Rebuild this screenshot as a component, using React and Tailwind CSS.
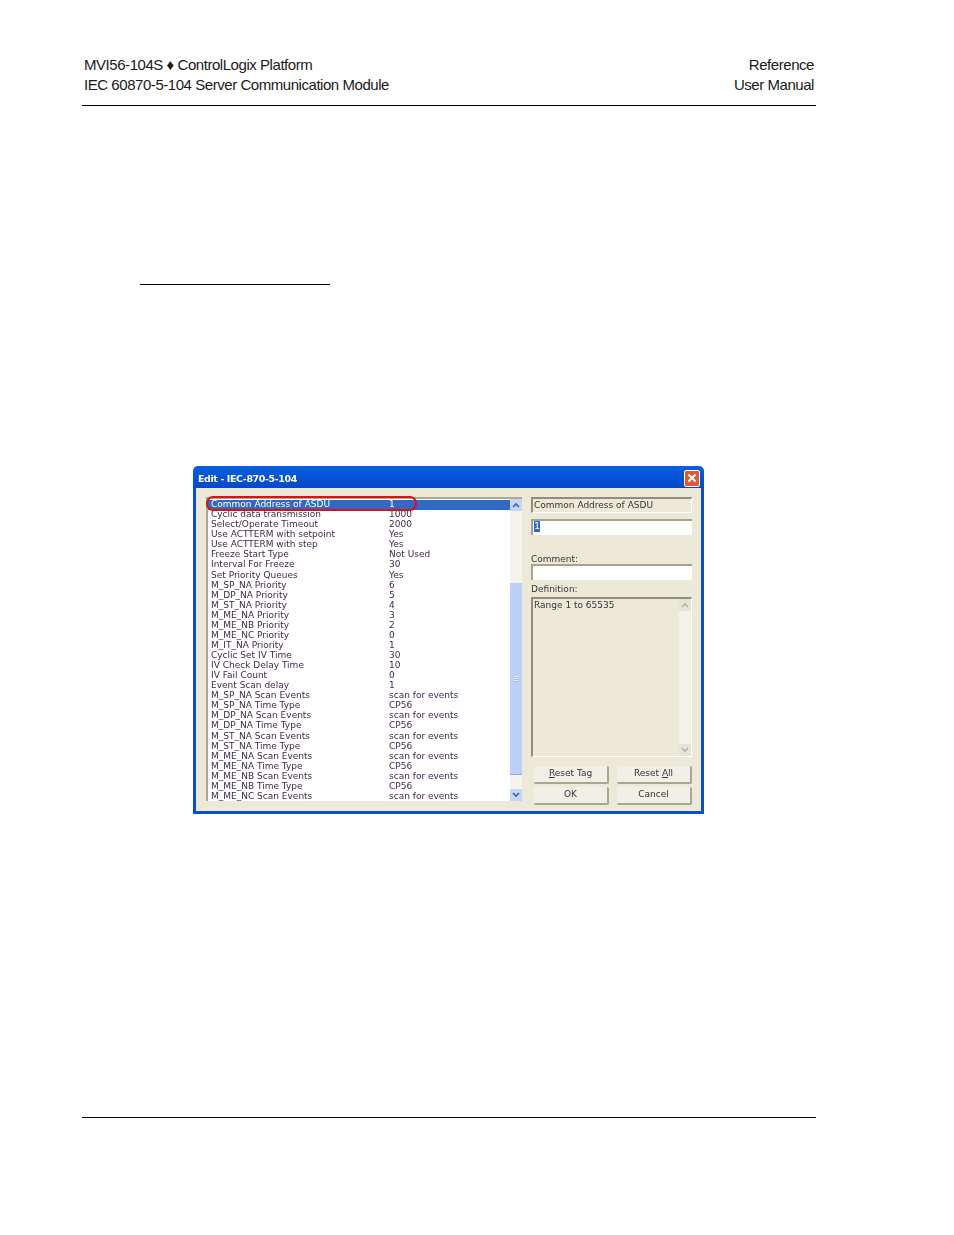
import React from "react";

const rows = [
  ["Common Address of ASDU", "1"],
  ["Cyclic data transmission", "1000"],
  ["Select/Operate Timeout", "2000"],
  ["Use ACTTERM with setpoint", "Yes"],
  ["Use ACTTERM with step", "Yes"],
  ["Freeze Start Type", "Not Used"],
  ["Interval For Freeze", "30"],
  ["Set Priority Queues", "Yes"],
  ["M_SP_NA Priority", "6"],
  ["M_DP_NA Priority", "5"],
  ["M_ST_NA Priority", "4"],
  ["M_ME_NA Priority", "3"],
  ["M_ME_NB Priority", "2"],
  ["M_ME_NC Priority", "0"],
  ["M_IT_NA Priority", "1"],
  ["Cyclic Set IV Time", "30"],
  ["IV Check Delay Time", "10"],
  ["IV Fail Count", "0"],
  ["Event Scan delay", "1"],
  ["M_SP_NA Scan Events", "scan for events"],
  ["M_SP_NA Time Type", "CP56"],
  ["M_DP_NA Scan Events", "scan for events"],
  ["M_DP_NA Time Type", "CP56"],
  ["M_ST_NA Scan Events", "scan for events"],
  ["M_ST_NA Time Type", "CP56"],
  ["M_ME_NA Scan Events", "scan for events"],
  ["M_ME_NA Time Type", "CP56"],
  ["M_ME_NB Scan Events", "scan for events"],
  ["M_ME_NB Time Type", "CP56"],
  ["M_ME_NC Scan Events", "scan for events"],
];

const Chevron = ({ up, color = "#3f5fa8" }) => (
  <svg width="8" height="6" viewBox="0 0 8 6" fill="none">
    <path d={up ? "M1 5 L4 2 L7 5" : "M1 1 L4 4 L7 1"} stroke={color} strokeWidth="1.6" />
  </svg>
);

const Btn = ({ children }) => (
  <div className="h-[18px] w-[75px] flex items-center justify-center rounded-[2px] bg-[#f1efe6] border-b-2 border-r-2 border-[#a9a692] text-[9px] text-[#3a3338]">
    {children}
  </div>
);

export default function App() {
  return (
    <div className="relative h-[1235px] w-[954px] bg-white font-['Liberation_Sans',sans-serif] text-[#1a1a1a]">
      <header className="ml-[82px] w-[734px] h-[106px] pt-[55px] border-b border-black">
        <div className="flex justify-between pl-[2px] pr-[2px] text-[15px] leading-[20px] tracking-[-0.45px]">
          <div>
            <div>MVI56-104S ♦ ControlLogix Platform</div>
            <div>IEC 60870-5-104 Server Communication Module</div>
          </div>
          <div className="text-right">
            <div>Reference</div>
            <div>User Manual</div>
          </div>
        </div>
      </header>

      <div className="ml-[140px] mt-[178px] w-[190px] h-px bg-black" />

      <div className="ml-[193px] mt-[181px] w-[511px] h-[348px] font-['DejaVu_Sans',sans-serif] blur-[0.25px]">
        <div className="h-[22px] flex items-center justify-between pl-[5px] pr-[4px] rounded-t-[5px] bg-gradient-to-b from-[#0a5fe0] via-[#0553d8] to-[#0648c8]">
          <span className="mt-[5px] text-white text-[9.5px] font-bold tracking-[-0.4px]">Edit - IEC-870-5-104</span>
          <div className="mt-[2px] w-[16px] h-[17px] flex items-center justify-center rounded-[2px] bg-[#dc5a3a] border border-white">
            <svg width="10" height="10" viewBox="0 0 10 10" fill="none">
              <path d="M1.5 1.5 L8.5 8.5 M8.5 1.5 L1.5 8.5" stroke="white" strokeWidth="2" />
            </svg>
          </div>
        </div>

        <div className="h-[326px] flex bg-[#ece9d8] border-x-[3px] border-b-[3px] border-[#0a4fc8] pl-[10px] pt-[9px] gap-[9px]">
          <div className="w-[316px] h-[304px] flex bg-white border-l-2 border-t-2 border-[#aca899]">
            <div className="w-[302px] relative pt-[0.8px]">
              {rows.map(([name, value], i) => (
                <div
                  key={name}
                  className={
                    i === 0
                      ? "flex h-[10.07px] items-center pl-[3px] text-[9px] bg-[#316ac5] text-white"
                      : "flex h-[10.07px] items-center pl-[3px] text-[9px] text-[#42284a]"
                  }
                >
                  <span className="w-[178px] whitespace-nowrap">{name}</span>
                  <span className="whitespace-nowrap">{value}</span>
                </div>
              ))}
              <div className="absolute left-[-2px] top-[-3px] w-[211px] h-[15px] rounded-[7px] border-[2.5px] border-[#e01010]" />
            </div>
            <div className="w-[12px] flex flex-col bg-[#f4f3ec]">
              <div className="h-[12px] flex items-center justify-center bg-[#c5d5f8]">
                <Chevron up />
              </div>
              <div className="h-[72px]" />
              <div className="h-[192px] bg-[#bccff7] border-b border-[#8fa8e0] flex items-center justify-center">
                <div className="w-[5px] h-[6px] bg-[repeating-linear-gradient(#e6edfc_0_1px,#a5bcec_1px_2px)]" />
              </div>
              <div className="flex-1" />
              <div className="h-[12px] flex items-center justify-center bg-[#c5d5f8]">
                <Chevron />
              </div>
            </div>
          </div>

          <div className="w-[161px] text-[9px] text-[#3a3338]">
            <div className="h-[16px] flex items-center pl-[1px] border-l-2 border-t-2 border-[#8f8d7e] border-r border-b border-r-white border-b-white whitespace-nowrap">
              Common Address of ASDU
            </div>
            <div className="mt-[6px] h-[16px] pl-[1px] bg-white border-l-2 border-t-2 border-[#a5a394]">
              <div className="w-[6px] h-[11px] bg-[#316ac5] text-white text-center leading-[10px]">1</div>
            </div>
            <div className="mt-[19px] h-[11px] leading-[11px]">Comment:</div>
            <div className="mt-[-1px] h-[16px] bg-white border-l-2 border-t-2 border-[#a5a394]" />
            <div className="mt-[4px] h-[11px] leading-[11px]">Definition:</div>
            <div className="mt-[2px] h-[160px] flex border-l-2 border-t-2 border-[#8f8d7e] border-r border-b border-r-white border-b-white">
              <div className="flex-1 pl-[1px] pt-[1px] leading-[11px]">Range 1 to 65535</div>
              <div className="w-[12px] flex flex-col justify-between bg-[#f3f1e8]">
                <div className="h-[12px] flex items-center justify-center bg-[#e6e4d8]">
                  <Chevron up color="#b5b3a6" />
                </div>
                <div className="h-[12px] flex items-center justify-center bg-[#e6e4d8]">
                  <Chevron color="#b5b3a6" />
                </div>
              </div>
            </div>
            <div className="mt-[9px] pl-[3px] grid grid-cols-[75px_75px] gap-x-[8px] gap-y-[3px]">
              <Btn><span><u>R</u>eset Tag</span></Btn>
              <Btn><span>Reset <u>A</u>ll</span></Btn>
              <Btn>OK</Btn>
              <Btn>Cancel</Btn>
            </div>
          </div>
        </div>
      </div>

      <div className="ml-[82px] mt-[303px] w-[734px] h-px bg-black" />
    </div>
  );
}
